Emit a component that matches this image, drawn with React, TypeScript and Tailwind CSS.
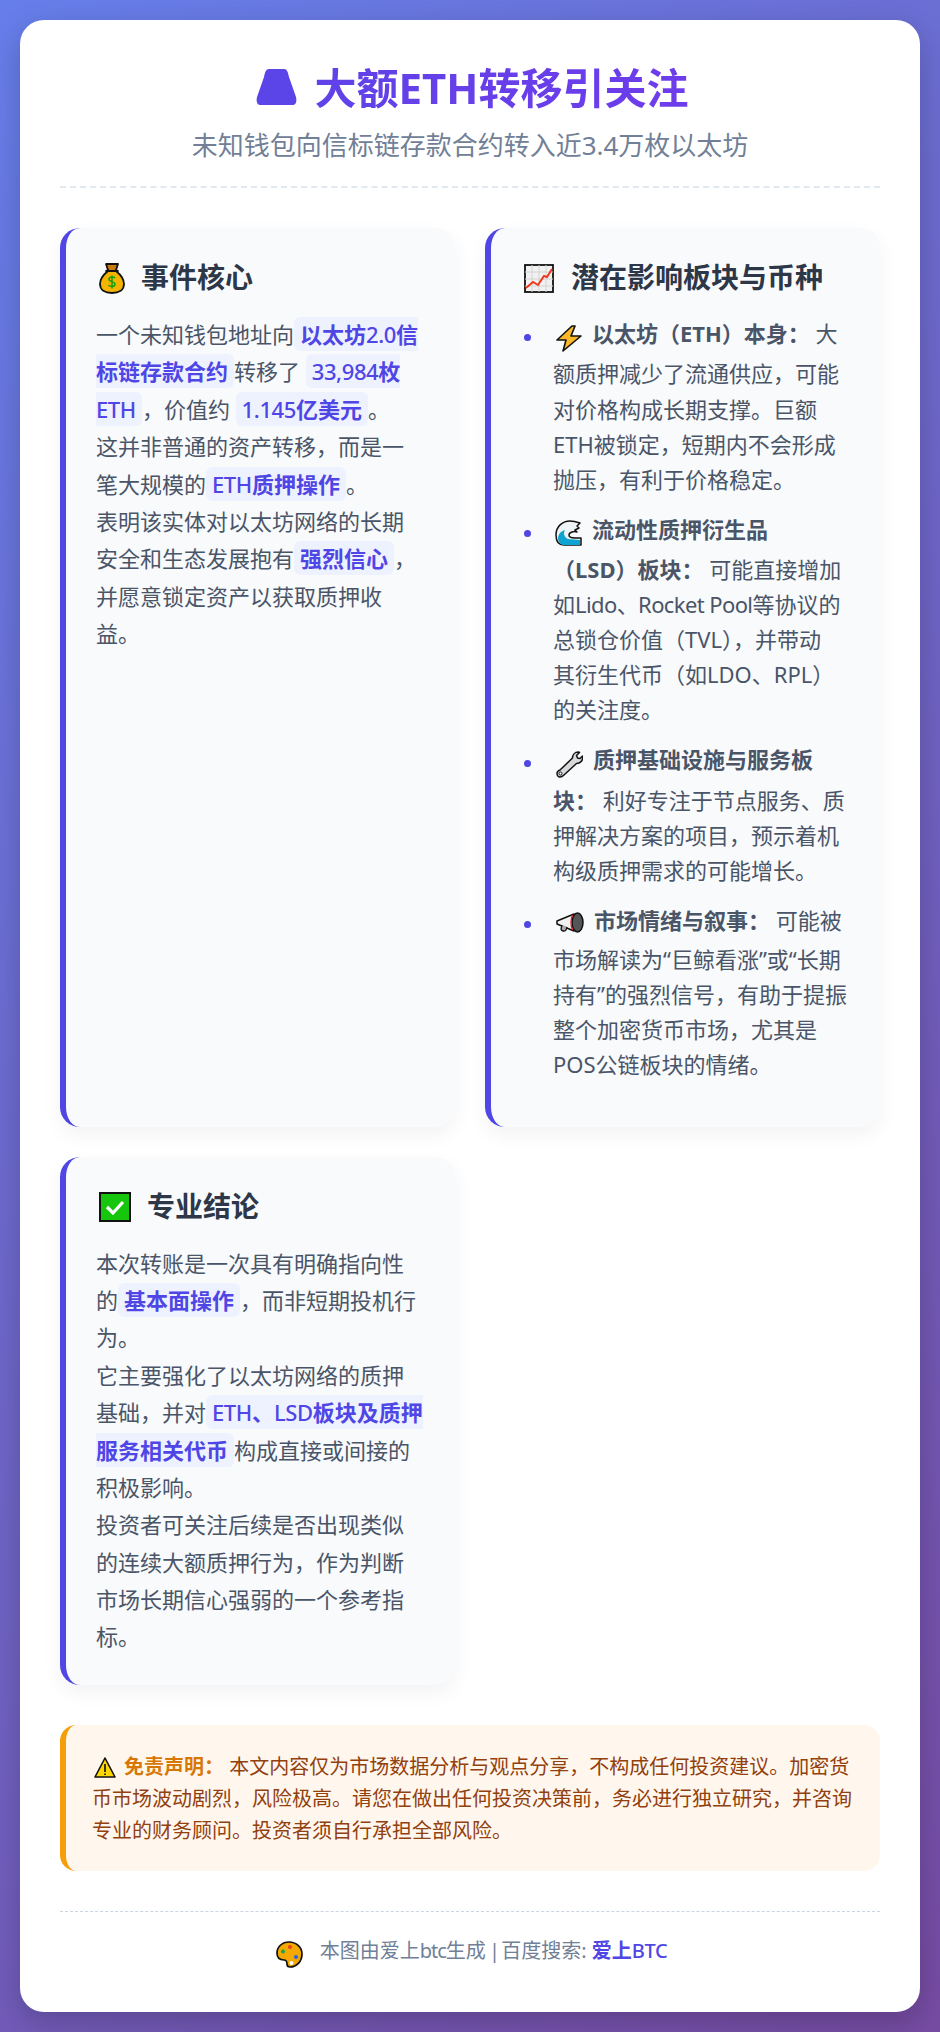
import type { ReactNode } from "react";

const FONT = "[font-family:'Noto_Sans','Noto_Sans_CJK_SC',sans-serif]";

const Hl = ({ children }: { children: ReactNode }) => (
  <span className="bg-[#eef2ff] text-[#4f46e5] font-bold px-[6px] py-[2px] rounded-[6px]">{children}</span>
);

const Lat = ({ children }: { children: ReactNode }) => <span className="font-medium tracking-[-0.4px]">{children}</span>;

const MoneyBag = () => (
  <svg viewBox="0 0 26 31" className="w-[26px] h-[31px] shrink-0">
    <path d="M7 1h12l-2 6 2 1H7l2-1z" fill="#c97a10" stroke="#111" strokeWidth="1.800" strokeLinejoin="round" />
    <path d="M9 8C4 12 1 16 1 21c0 6 5 9 12 9s12-3 12-9c0-5-3-9-8-13z" fill="#f5b400" stroke="#111" strokeWidth="1.800" />
    <path d="M16 15c-1-1.500-6-1.500-6 1.200 0 3 6 2 6 5 0 2.800-5 2.600-6.500 1M13 12.500v13" fill="none" stroke="#10a010" strokeWidth="1.500" />
  </svg>
);

const Chart = () => (
  <svg viewBox="0 0 30 29" className="w-[30px] h-[29px] shrink-0">
    <rect x="1" y="1" width="28" height="27" fill="#f1f1f1" stroke="#111" strokeWidth="1.800" />
    <path d="M8 1v27M15 1v27M22 1v27M1 8h28M1 15h28M1 22h28" stroke="#d4d4d4" strokeWidth="1" />
    <path d="M2 24l7-6 5 3 6-9 3 1 5-8" fill="none" stroke="#ef3a1d" strokeWidth="2" />
  </svg>
);

const Check = () => (
  <svg viewBox="0 0 32 30" className="w-[32px] h-[30px] shrink-0">
    <rect x="1" y="1" width="30" height="28" fill="#16c60c" stroke="#111" strokeWidth="2" />
    <path d="M8 15l6 6 10-11" fill="none" stroke="#fff" strokeWidth="3.200" />
  </svg>
);

const Bolt = () => (
  <svg viewBox="0 0 26 27" className="w-[26px] h-[27px] inline-block align-[-14.4px] mb-[4.9px] ml-[3px] mr-[10px]">
    <path d="M16 1L1 15h9l-3 11 18-15h-10l4-10z" fill="#fcb827" stroke="#111" strokeWidth="1.600" strokeLinejoin="round" />
  </svg>
);

const Wave = () => (
  <svg viewBox="0 0 27 26" className="w-[27px] h-[26px] inline-block align-[-13.4px] mb-[5.9px] ml-[2px] mr-[10px]">
    <path d="M26 25H9C3 25 1 20 1 15 1 6 8 1 15 1c4 0 7 1 10 2l-3 3 2 2-4 2 2 2c-3-1-8 0-8 3 0 2 3 3 6 3h6z" fill="#eef3f6" stroke="#111" strokeWidth="1.500" strokeLinejoin="round" />
    <path d="M3 19c0-5 3-8 7-9-2 3-1 7 3 9l12 1v5H9c-3 0-5-2-6-6z" fill="#0fa3d1" />
  </svg>
);

const Wrench = () => (
  <svg viewBox="0 0 27 27" className="w-[27px] h-[27px] inline-block align-[-14.4px] mb-[4.9px] ml-[3px] mr-[10px]">
    <path d="M4 26c-2 0-3-2-3-3.500 0-2 1.500-3 3-3.500L16.500 7c0-3 2-6 6-6l1 .5-3 3 1 2.500 2.500.5 2.500-2.500c1 4-2 7.500-6 7.500L8 24c-1 1-2 2-4 2z" fill="#d9d9d9" stroke="#111" strokeWidth="1.500" strokeLinejoin="round" />
    <circle cx="4.500" cy="22.500" r="1.500" fill="#fff" stroke="#111" />
  </svg>
);

const Megaphone = () => (
  <svg viewBox="0 0 28 21" className="w-[28px] h-[21px] inline-block align-[-12.4px] mb-[8.9px] ml-[3px] mr-[10px]">
    <path d="M1 9l17-7v17L1 12z" fill="#f2f2f2" stroke="#111" strokeWidth="1.500" strokeLinejoin="round" />
    <path d="M6 13l-1 4c0 2 4 3 5 1l1-3" fill="#aaa" stroke="#111" strokeWidth="1.300" />
    <ellipse cx="21.500" cy="10.500" rx="5.500" ry="9.500" fill="#555" stroke="#111" strokeWidth="1.500" />
    <path d="M16.500 3c-2 4-2 11 0 15" fill="none" stroke="#e81224" strokeWidth="1.300" />
  </svg>
);

const Warning = () => (
  <svg viewBox="0 0 22 21" className="w-[22px] h-[21px] inline-block align-[-4px] ml-[2px] mr-[8px]">
    <path d="M11 1L1 20h20z" fill="#fcd800" stroke="#111" strokeWidth="1.600" strokeLinejoin="round" />
    <path d="M11 7v8M11 16.500v1.500" stroke="#111" strokeWidth="1.600" />
  </svg>
);

const Palette = () => (
  <svg viewBox="0 0 27 27" className="w-[27px] h-[27px] shrink-0 mt-[6px]">
    <path d="M13 1C6 1 1 6 1 12c0 5 3 7 7 7 3 0 3 2 3 4s1 3 3 3c7 0 12-6 12-13S20 1 13 1z" fill="#f5a800" stroke="#111" strokeWidth="1.700" />
    <circle cx="14" cy="6" r="2" fill="#e8402a" />
    <circle cx="7" cy="10.500" r="2" fill="#16a34a" />
    <circle cx="20" cy="16" r="2" fill="#2563eb" />
    <circle cx="15.500" cy="22" r="2" fill="#fff" />
  </svg>
);

const CardTitle = ({ icon, gap, children }: { icon: ReactNode; gap: string; children: ReactNode }) => (
  <h2 className={`flex items-center h-[40px] mb-[18px] text-[28px] font-bold text-[#2d3748] ${gap}`}>
    {icon}
    {children}
  </h2>
);

const Card = ({ children }: { children: ReactNode }) => (
  <div className="bg-[#f8fafc] border-l-[6px] border-[#4f46e5] rounded-[20px] px-[30px] pt-[30px] pb-[29px] shadow-[0_8px_20px_rgba(0,0,0,0.05)]">
    {children}
  </div>
);

const Item = ({ children }: { children: ReactNode }) => (
  <li className="relative mb-[15px] before:absolute before:left-[-29px] before:top-[18px] before:w-[7px] before:h-[7px] before:rounded-full before:bg-[#4f46e5]">
    {children}
  </li>
);

const App = () => {
  return (
    <div className={`${FONT} w-[940px] h-[2032px] p-5 bg-linear-[135deg,#667eea,#764ba2] text-[22px] leading-[1.7] text-[#4a5568]`}>
      <div className="h-[1992px] bg-white rounded-[24px] px-10 pt-10 shadow-[0_10px_30px_rgba(0,0,0,0.2)]">
        <header className="pb-[19px] border-b-2 border-dashed border-[#e2e8f0] text-center">
          <h1 className="flex justify-center items-center gap-[18px] pl-[4px] h-[56px] text-[42px] font-bold leading-[56px]">
            <svg viewBox="0 0 41 36" className="w-[41px] h-[36px] mt-[-2px]">
              <path d="M13 0h15c3 0 4 3 5 8l7 20c1 4 0 8-3 8H4c-3 0-4-4-3-8L8 8c1-5 2-8 5-8z" fill="#5b45e8" />
            </svg>
            <span className="bg-linear-to-r from-[#6042e8] to-[#6e3ceb] bg-clip-text text-transparent">大额ETH转移引关注</span>
          </h1>
          <p className="mt-[7px] text-[26px] leading-[44px] text-[#718096]">未知钱包向信标链存款合约转入近3.4万枚以太坊</p>
        </header>

        <div className="grid grid-cols-2 gap-[30px] mt-10">
          <Card>
            <CardTitle icon={<MoneyBag />} gap="gap-[16px] pl-[3px]">事件核心</CardTitle>
            <p>
              一个未知钱包地址向<Hl>以太坊<Lat>2.0</Lat>信标链存款合约</Hl>转移了 <Hl><Lat>33,984</Lat>枚 <Lat>ETH</Lat></Hl>，价值约 <Hl><Lat>1.145</Lat>亿美元</Hl>。
              <br />
              这并非普通的资产转移，而是一笔大规模的<Hl><Lat>ETH</Lat>质押操作</Hl>。
              <br />
              表明该实体对以太坊网络的长期安全和生态发展抱有<Hl>强烈信心</Hl>，并愿意锁定资产以获取质押收益。
            </p>
          </Card>

          <Card>
            <CardTitle icon={<Chart />} gap="gap-[17px] pl-[3px]">潜在影响板块与币种</CardTitle>
            <ul className="pl-8 leading-[1.6]">
              <Item>
                <Bolt /><strong className="font-bold">以太坊（ETH）本身：</strong> 大额质押减少了流通供应，可能对价格构成长期支撑。巨额ETH被锁定，短期内不会形成抛压，有利于价格稳定。
              </Item>
              <Item>
                <Wave /><strong className="font-bold">流动性质押衍生品<br />（LSD）板块：</strong> 可能直接增加如<span className="tracking-[-0.6px]">Lido、Rocket Pool</span>等协议的总锁仓价值（TVL），并带动<br />其衍生代币（如LDO、RPL）<br />的关注度。
              </Item>
              <Item>
                <Wrench /><strong className="font-bold">质押基础设施与服务板块：</strong> 利好专注于节点服务、质押解决方案的项目，预示着机构级质押需求的可能增长。
              </Item>
              <Item>
                <Megaphone /><strong className="font-bold">市场情绪与叙事：</strong> 可能被市场解读为“巨鲸看涨”或“长期持有”的强烈信号，有助于提振整个加密货币市场，尤其是POS公链板块的情绪。
              </Item>
            </ul>
          </Card>

          <Card>
            <CardTitle icon={<Check />} gap="gap-[16px] pl-[3px]">专业结论</CardTitle>
            <p>
              本次转账是一次具有明确指向性的<Hl>基本面操作</Hl>，而非短期投机行为。
              <br />
              它主要强化了以太坊网络的质押基础，并对<Hl><Lat>ETH</Lat>、<Lat>LSD</Lat>板块及质押服务相关代币</Hl>构成直接或间接的积极影响。
              <br />
              投资者可关注后续是否出现类似的连续大额质押行为，作为判断市场长期信心强弱的一个参考指标。
            </p>
          </Card>
        </div>

        <div className="mt-10 bg-[#fff7ed] border-l-[6px] border-[#f59e0b] rounded-[16px] pl-[26px] pr-[20px] pt-[26px] pb-[24px] text-[20px] leading-[32px] text-[#92400e]">
          <Warning /><strong className="font-bold text-[#d97706]">免责声明：</strong> 本文内容仅为市场数据分析与观点分享，不构成任何投资建议。加密货币市场波动剧烈，风险极高。请您在做出任何投资决策前，务必进行独立研究，并咨询专业的财务顾问。投资者须自行承担全部风险。
        </div>

        <footer className="mt-10 pt-[23px] border-t border-dashed border-[#cbd5e1] flex justify-center items-center gap-[17px] pl-[3px] text-[20px] leading-[32px] text-[#718096]">
          <Palette />
          <span>本图由爱上<span className="tracking-[-1px]">btc</span>生成<span className="tracking-[-2px]"> | </span>百度搜索: <strong className="font-bold text-[#4f46e5]">爱上<Lat>BTC</Lat></strong></span>
        </footer>
      </div>
    </div>
  );
};

export default App;
